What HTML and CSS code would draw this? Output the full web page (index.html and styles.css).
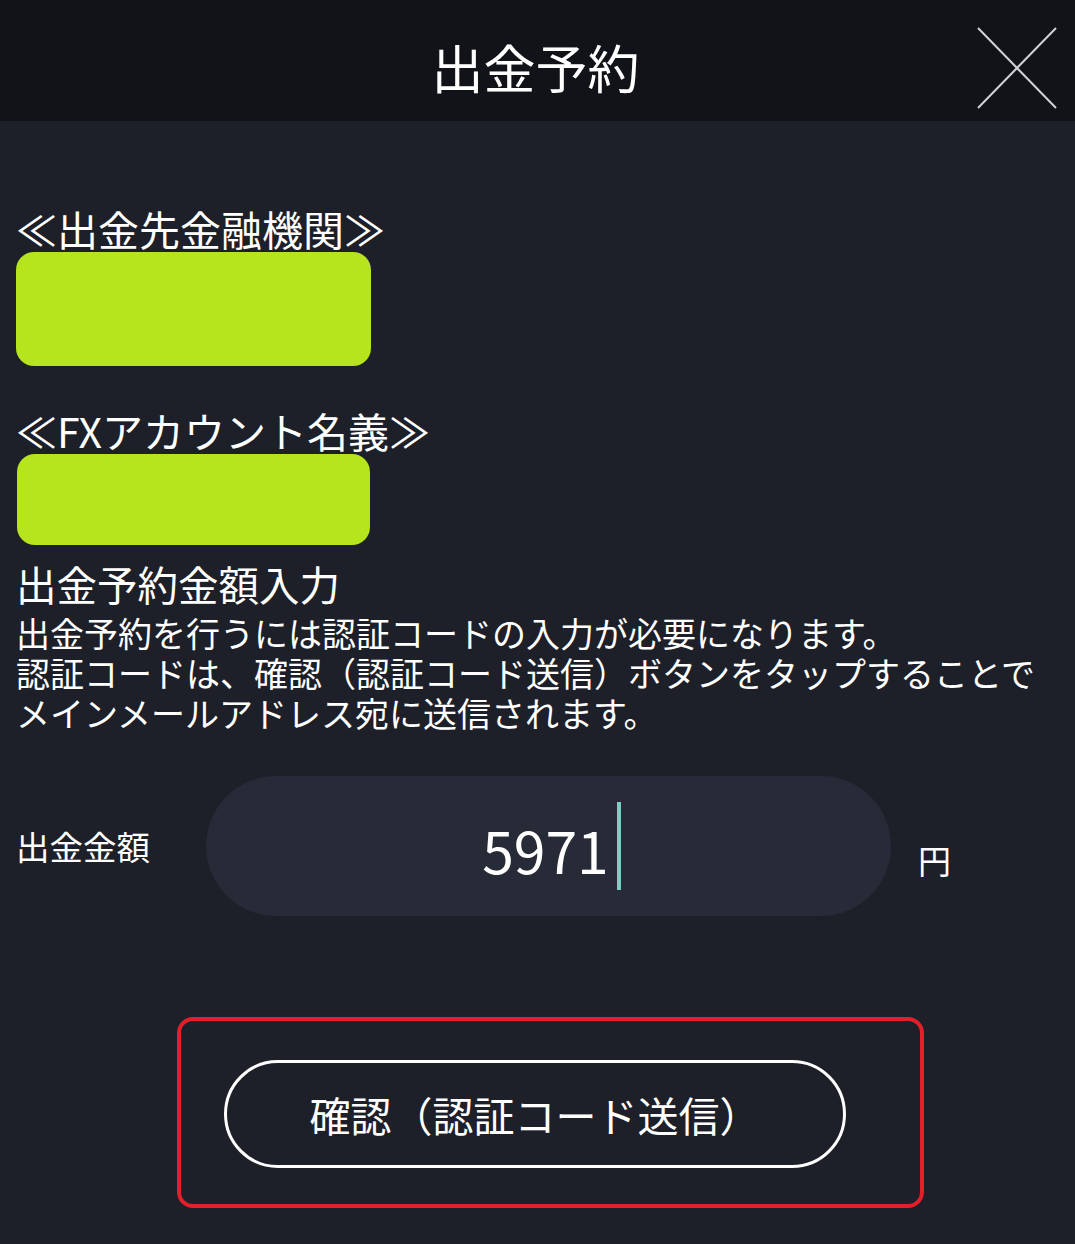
FILE: index.html
```html
<!DOCTYPE html>
<html lang="ja">
<head>
  <meta charset="UTF-8">
  <meta name="viewport" content="width=device-width, initial-scale=1.0">
  <title>出金予約</title>
  <link rel="stylesheet" href="styles.css">
</head>
<body>

  <!-- Header -->
  <header class="header">
    <div></div>
    <h1 class="header-title">出金予約</h1>
    <button class="close-btn" aria-label="閉じる">
      <svg width="80" height="82" viewBox="0 0 80 82">
        <line x1="1" y1="1" x2="79" y2="81" stroke="#d2d2d4" stroke-width="2"/>
        <line x1="79" y1="1" x2="1" y2="81" stroke="#d2d2d4" stroke-width="2"/>
      </svg>
    </button>
  </header>

  <!-- Content -->
  <main class="content">
    <p class="section-label first">≪出金先金融機関≫</p>
    <div class="masked masked-bank"></div>

    <p class="section-label second">≪FXアカウント名義≫</p>
    <div class="masked masked-name"></div>

    <h2 class="amount-title">出金予約金額入力</h2>
    <p class="note">
      出金予約を行うには認証コードの入力が必要になります。<br>
      認証コードは、確認（認証コード送信）ボタンをタップすることで<br>
      メインメールアドレス宛に送信されます。
    </p>

    <div class="amount-row">
      <span class="amount-label">出金金額</span>
      <div class="amount-input">
        <span class="amount-value">5971</span><span class="caret"></span>
      </div>
      <span class="amount-unit">円</span>
    </div>

    <div class="confirm-frame">
      <button class="confirm-btn">確認（認証コード送信）</button>
    </div>
  </main>

</body>
</html>
```

FILE: styles.css
```css
/* Reset */
* {
  margin: 0;
  padding: 0;
  box-sizing: border-box;
}

body {
  font-family: "Noto Sans CJK JP", "Noto Sans", sans-serif;
  background-color: #1e2029;
  color: #fff;
  width: 1075px;
  min-height: 1244px;
}

/* Header */
.header {
  display: grid;
  grid-template-columns: 1fr auto 1fr;
  align-items: start;
  height: 121px;
  background-color: #121318;
}

.header-title {
  margin-top: 37px;
  margin-right: 4px;
  font-size: 52px;
  font-weight: 400;
  line-height: 60px;
}

.close-btn {
  justify-self: end;
  margin-top: 27px;
  margin-right: 18px;
  width: 80px;
  height: 82px;
  background: none;
  border: none;
  cursor: pointer;
}

.close-btn svg {
  display: block;
}

/* Content */
.content {
  padding-left: 16px;
}

.section-label {
  font-size: 41px;
  line-height: 48px;
}

.section-label.first {
  margin-top: 83px;
}

.section-label.second {
  margin-top: 40px;
}

.masked {
  background-color: #b6e51e;
  border-radius: 18px;
}

.masked-bank {
  width: 355px;
  height: 114px;
}

.masked-name {
  width: 353px;
  height: 91px;
  margin-left: 1px;
}

.amount-title {
  margin-top: 15px;
  font-size: 40.5px;
  font-weight: 400;
  line-height: 48px;
}

.note {
  margin-top: 5px;
  font-size: 34px;
  line-height: 40px;
  white-space: nowrap;
}

/* Amount input */
.amount-row {
  display: flex;
  align-items: center;
  margin-top: 43px;
}

.amount-label {
  width: 190px;
  font-size: 33.5px;
  line-height: 40px;
}

.amount-input {
  display: flex;
  align-items: center;
  justify-content: center;
  width: 685px;
  height: 140px;
  border-radius: 70px;
  background-color: #272a37;
}

.amount-value {
  font-size: 57px;
  line-height: 70px;
  margin-top: 6px;
  margin-left: 6px;
}

.caret {
  display: inline-block;
  width: 4px;
  height: 88px;
  margin-left: 8px;
  background-color: #7ecec6;
}

.amount-unit {
  margin-left: 27px;
  margin-top: 28px;
  font-size: 33px;
  line-height: 40px;
}

/* Confirm */
.confirm-frame {
  width: 747px;
  margin-top: 101px;
  margin-left: 161px;
  padding: 39px 0 36px 43px;
  border: 4px solid #e51f2a;
  border-radius: 16px;
}

.confirm-btn {
  display: flex;
  align-items: center;
  justify-content: center;
  width: 622px;
  height: 108px;
  border: 3px solid #fff;
  border-radius: 54px;
  background: none;
  color: #fff;
  font-family: "Noto Sans CJK JP", "Noto Sans", sans-serif;
  font-size: 41px;
  line-height: 48px;
  cursor: pointer;
}
```
